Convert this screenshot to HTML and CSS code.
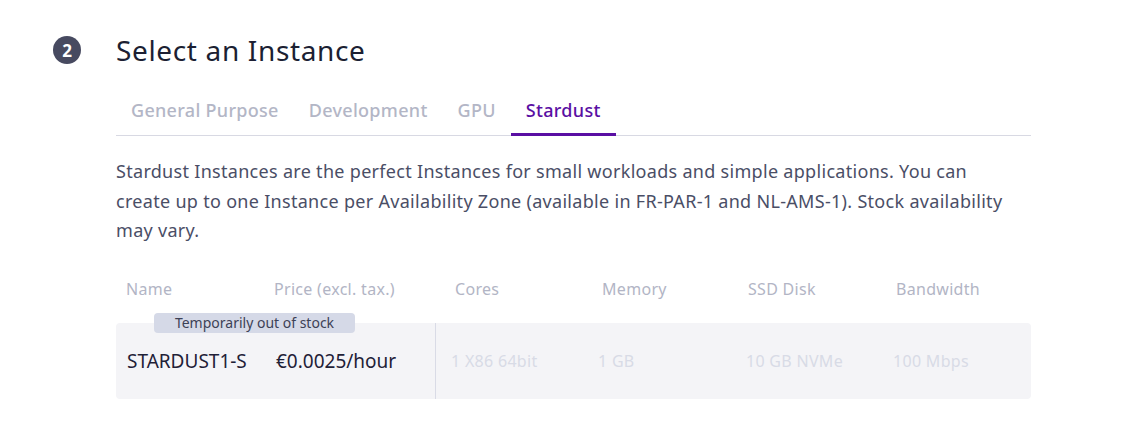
FILE: index.html
```html
<!DOCTYPE html>
<html>
<head>
<meta charset="utf-8">
<link rel="stylesheet" href="styles.css">
</head>
<body>
<section class="step">
  <header class="step-head">
    <span class="step-num">2</span>
    <h2 class="step-title">Select an Instance</h2>
  </header>
  <div class="step-body">
    <nav class="tabs">
      <span class="tab">General Purpose</span>
      <span class="tab">Development</span>
      <span class="tab">GPU</span>
      <span class="tab active">Stardust</span>
    </nav>
    <p class="desc">Stardust Instances are the perfect Instances for small workloads and simple applications. You can create up to one Instance per Availability Zone (available in FR-PAR-1 and NL-AMS-1). Stock availability may vary.</p>
    <div class="table">
      <div class="thead">
        <span class="c c-name">Name</span>
        <span class="c c-price">Price (excl. tax.)</span>
        <span class="c c-cores">Cores</span>
        <span class="c c-mem">Memory</span>
        <span class="c c-ssd">SSD Disk</span>
        <span class="c c-bw">Bandwidth</span>
      </div>
      <div class="row">
        <span class="stock">Temporarily out of stock</span>
        <div class="main">
          <span class="c c-name">STARDUST1-S</span>
          <span class="c c-price">€0.0025/hour</span>
        </div>
        <div class="specs">
          <span class="c c-cores">1 X86 64bit</span>
          <span class="c c-mem">1 GB</span>
          <span class="c c-ssd">10 GB NVMe</span>
          <span class="c c-bw">100 Mbps</span>
        </div>
      </div>
    </div>
  </div>
</section>
</body>
</html>
```

FILE: styles.css
```css
html, body {
  margin: 0;
  background: #ffffff;
  font-family: "Noto Sans", "Open Sans", sans-serif;
}
.step {
  padding: 32px 0 0 53px;
  width: 978px;
}
.step-head {
  display: flex;
  align-items: center;
  height: 36px;
}
.step-num {
  width: 28px;
  height: 28px;
  border-radius: 50%;
  background: #474a60;
  color: #fff;
  font-weight: 700;
  font-size: 17px;
  display: flex;
  align-items: center;
  justify-content: center;
  margin-right: 35px;
}
.step-title {
  margin: 0;
  font-weight: 400;
  font-size: 28px;
  color: #1c1f33;
  letter-spacing: 0.65px;
}
.step-body {
  margin-left: 63px;
  width: 915px;
}
.tabs {
  display: flex;
  margin-top: 22px;
  border-bottom: 1px solid #d8d9e3;
}
.tab {
  padding: 8px 15px 13px;
  font-size: 18px;
  font-weight: 500;
  color: #b3b6c6;
  letter-spacing: 0.3px;
  position: relative;
}
.tab.active {
  color: #5a0fa3;
}
.tab.active::after {
  content: "";
  position: absolute;
  left: 0;
  right: 0;
  bottom: -1px;
  height: 3px;
  background: #5a0fa3;
}
.desc {
  margin: 21px 0 0;
  max-width: 902px;
  font-size: 18px;
  line-height: 29.5px;
  letter-spacing: 0.3px;
  color: #4a4e66;
}
.table {
  margin-top: 25px;
}
.thead {
  display: flex;
  padding: 0 10px;
  height: 36px;
  align-items: center;
  font-size: 16px;
  letter-spacing: 0.3px;
  color: #b2b5c5;
}
.c {
  width: 148px;
  flex: none;
}
.thead .c-price { width: 181px; }
.thead .c-cores { width: 147px; }
.thead .c-mem { width: 146px; }
.row {
  margin-top: 16px;
  position: relative;
  display: flex;
  height: 76px;
  background: #f4f4f7;
  border-radius: 4px;
}
.stock {
  position: absolute;
  left: 38px;
  top: -10px;
  width: 201px;
  height: 20px;
  background: #d5d9e7;
  border-radius: 4px;
  font-size: 14px;
  color: #3d4156;
  text-align: center;
  line-height: 20px;
}
.main {
  flex: none;
  display: flex;
  align-items: center;
  padding-left: 11px;
  width: 308px;
  border-right: 1px solid #d9dbe6;
  font-size: 19px;
  color: #1f2137;
}
.main .c-name { width: 149px; }
.main .c-price { width: auto; }
.specs {
  display: flex;
  align-items: center;
  padding-left: 15px;
  font-size: 16px;
  letter-spacing: 0.3px;
  color: #d8dbe6;
}
.specs .c { width: 147px; }
.specs .c-mem { width: 148px; }
```
